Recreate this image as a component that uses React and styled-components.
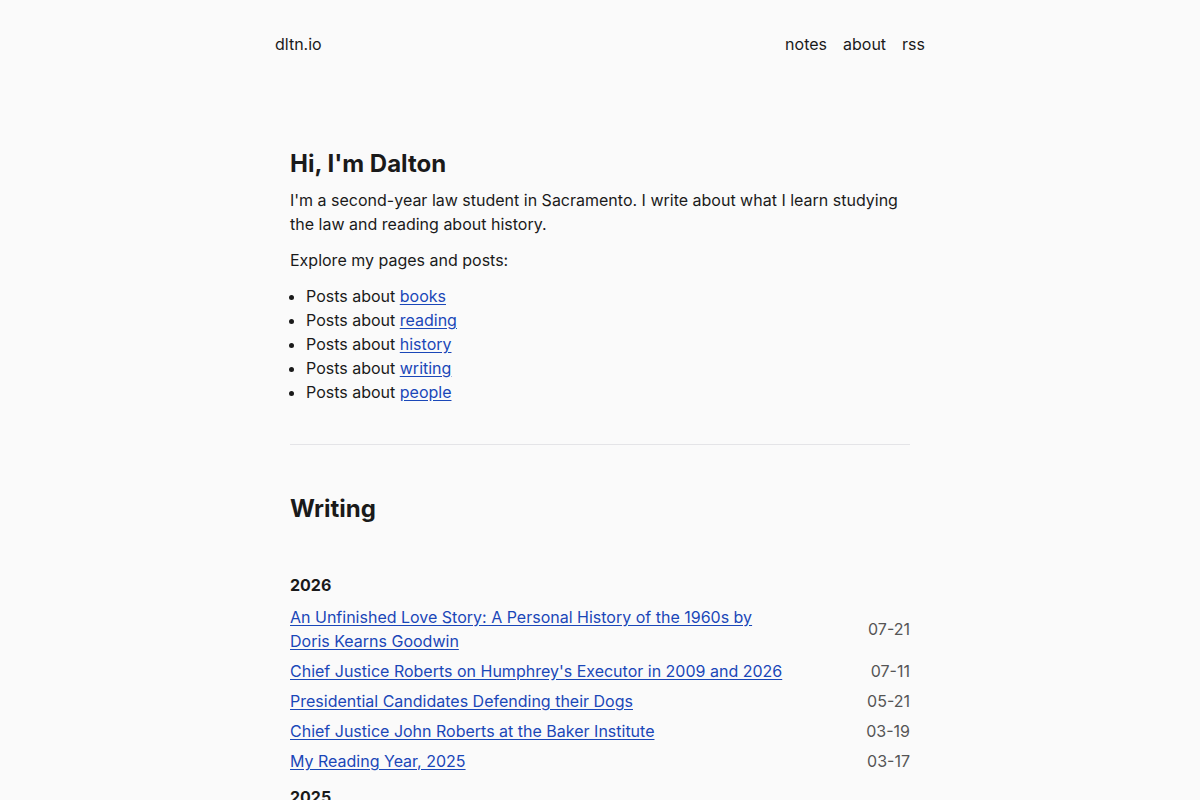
import styled, { createGlobalStyle } from "styled-components";

const GlobalStyle = createGlobalStyle`
    body {
        margin: 0;
        background: #fafafa;
        color: #1a1a1a;
        font-family: Inter, "Noto Sans", sans-serif;
        font-size: 16px;
        line-height: 24px;
    }
    a {
        color: #1a47b8;
        text-decoration: underline;
        text-underline-offset: 2px;
    }
`

const topics = ['books', 'reading', 'history', 'writing', 'people']

const posts = [
    { title: 'An Unfinished Love Story: A Personal History of the 1960s by Doris Kearns Goodwin', date: '07-21' },
    { title: "Chief Justice Roberts on Humphrey's Executor in 2009 and 2026", date: '07-11' },
    { title: 'Presidential Candidates Defending their Dogs', date: '05-21' },
    { title: 'Chief Justice John Roberts at the Baker Institute', date: '03-19' },
    { title: 'My Reading Year, 2025', date: '03-17' },
]

function App() {
  return (
    <>
        <GlobalStyle />
        <Header>
            <Brand>dltn.io</Brand>
            <Nav>
                <NavLink>notes</NavLink>
                <NavLink>about</NavLink>
                <NavLink>rss</NavLink>
            </Nav>
        </Header>
        <Main>
            <Title>Hi, I'm Dalton</Title>
            <Para>I'm a second-year law student in Sacramento. I write about what I learn studying the law and reading about history.</Para>
            <Para>Explore my pages and posts:</Para>
            <TopicList>
                {topics.map((t) => (
                    <li key={t}>Posts about <a href="#">{t}</a></li>
                ))}
            </TopicList>
            <Rule />
            <Section>Writing</Section>
            <YearGroup>
                <Year>2026</Year>
                {posts.map((p) => (
                    <PostRow key={p.title}>
                        <PostTitle href="#">{p.title}</PostTitle>
                        <PostDate>{p.date}</PostDate>
                    </PostRow>
                ))}
            </YearGroup>
            <YearGroup>
                <Year>2025</Year>
            </YearGroup>
        </Main>
    </>
  )
}

const Header = styled.header`
    max-width: 650px;
    margin: 0 auto;
    padding-top: 32px;
    display: flex;
    justify-content: space-between;
    align-items: center;
`

const Brand = styled.div`
    color: #1a1a1a;
`

const Nav = styled.nav`
    display: flex;
    gap: 16px;
`

const NavLink = styled.span`
    color: #1a1a1a;
`

const Main = styled.main`
    max-width: 620px;
    margin: 92px auto 0;
`

const Title = styled.h1`
    font-size: 24px;
    line-height: 32px;
    font-weight: 700;
    margin: 0 0 8px;
`

const Para = styled.p`
    margin: 0 0 12px;
`

const TopicList = styled.ul`
    margin: 0;
    padding-left: 16px;
`

const Rule = styled.hr`
    border: none;
    border-top: 1px solid #e4e4e7;
    margin: 40px 0 48px;
`

const Section = styled.h2`
    font-size: 24px;
    line-height: 32px;
    font-weight: 700;
    margin: 0 0 48px;
`

const YearGroup = styled.div`
    display: flex;
    flex-direction: column;
    gap: 6px;
    margin-bottom: 12px;
`

const Year = styled.h3`
    font-size: 16px;
    line-height: 24px;
    font-weight: 700;
    margin: 0 0 2px;
`

const PostRow = styled.div`
    display: flex;
    justify-content: space-between;
    align-items: center;
`

const PostTitle = styled.a`
    max-width: 500px;
`

const PostDate = styled.span`
    color: #555;
`

export default App
